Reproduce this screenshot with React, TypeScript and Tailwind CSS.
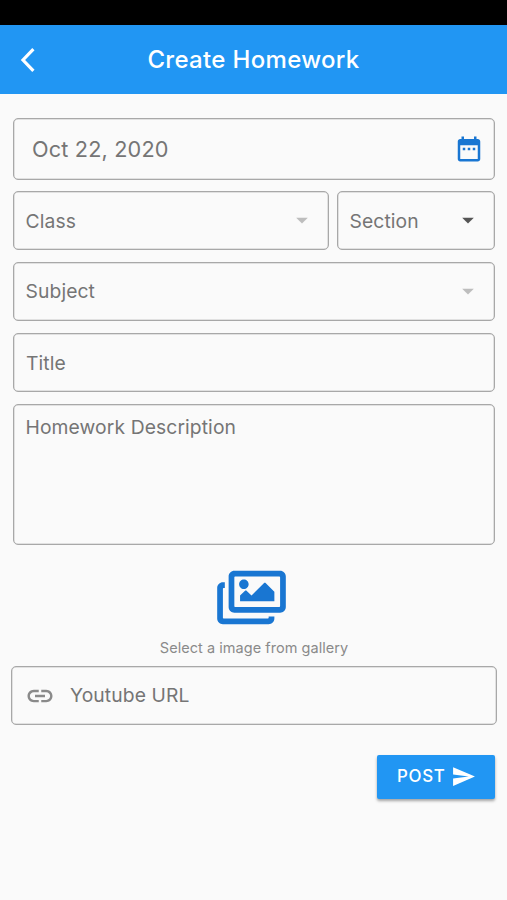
import React from 'react';
import { FaRegImages } from 'react-icons/fa';
import { MdArrowDropDown, MdLink, MdSend } from 'react-icons/md';
import { clsx } from 'clsx';

const BackIcon: React.FC<{ className?: string }> = ({ className }) => (
    <svg viewBox="0 0 16 26" fill="none" stroke="currentColor" strokeWidth="3.2" className={className}>
        <path d="M13.4 2.2L3 13l10.4 10.8" />
    </svg>
);

const CalendarIcon: React.FC<{ className?: string }> = ({ className }) => (
    <svg viewBox="0 0 24 24" fill="currentColor" className={className}>
        <path d="M9 11H7v2h2v-2zm4 0h-2v2h2v-2zm4 0h-2v2h2v-2zm2-7h-1V2h-2v2H8V2H6v2H5c-1.11 0-1.99.9-1.99 2L3 20c0 1.1.89 2 2 2h14c1.1 0 2-.9 2-2V6c0-1.1-.9-2-2-2zm0 16H5V9h14v11z" />
    </svg>
);

const Field: React.FC<{ className?: string; children: React.ReactNode }> = ({ className, children }) => (
    <div className={clsx('flex border border-[#a8a8a8] rounded-[5px] shadow-[inset_0_0_0_0.5px_#c8c8c8] text-[#757575] text-[19.3px] leading-6 tracking-[0.1px]', className)}>
        {children}
    </div>
);

const SelectField: React.FC<{ label: string; disabled?: boolean; className?: string }> = ({ label, disabled, className }) => (
    <Field className={clsx('items-center justify-between pl-[11.5px] pr-3', className)}>
        <span>{label}</span>
        <MdArrowDropDown className={clsx('w-7 h-7 -mt-px', disabled ? 'text-[#bdbdbd]' : 'text-[#555]')} />
    </Field>
);

export default function App() {
    return (
        <div className="w-full h-[900px] bg-[#fafafa] font-['Inter',sans-serif] overflow-hidden">
            {/* Status bar */}
            <div className="h-[25px] bg-black"></div>

            <header className="h-[69px] bg-[#2196f3] text-white grid grid-cols-[1fr_auto_1fr] items-center">
                <button className="pl-5" aria-label="Back">
                    <BackIcon className="w-4 h-[26px]" />
                </button>
                <h1 className="text-2xl font-medium tracking-[0.33px]">Create Homework</h1>
            </header>

            <main className="pt-6 pl-[13px] pr-3 flex flex-col">
                <Field className="h-[62px] items-center justify-between pl-[18px] pr-[10px]">
                    <span className="text-[21.7px] tracking-[0.15px]">Oct 22, 2020</span>
                    <CalendarIcon className="w-[30px] h-[30px] text-[#1976d2]" />
                </Field>

                <div className="flex gap-2 mt-[11px]">
                    <SelectField label="Class" disabled className="w-[316px] h-[59px]" />
                    <SelectField label="Section" className="flex-1 h-[59px]" />
                </div>

                <SelectField label="Subject" disabled className="mt-3 h-[59px] pb-px" />

                <Field className="mt-3 h-[59px] items-center pl-3">
                    <span>Title</span>
                </Field>

                <Field className="mt-3 h-[141px] pl-[11.5px] pt-[10px]">
                    <span>Homework Description</span>
                </Field>

                {/* Gallery picker */}
                <div className="flex flex-col items-center mt-[22px] h-[99px] text-[#1976d2]">
                    <FaRegImages className="w-[69px] h-[61px] mr-[5px]" />
                    <p className="mt-[10px] text-[14.5px] leading-5 tracking-[0.04px] text-[#8a8a8a]">Select a image from gallery</p>
                </div>

                <Field className="h-[59px] -mx-[2px] items-center pl-[13px]">
                    <MdLink className="w-[30px] h-[30px] text-[#8a8a8a]" />
                    <span className="ml-[15px] -mt-[2px]">Youtube URL</span>
                </Field>

                <button className="self-end mt-[30px] w-[118px] h-[44px] rounded-[2px] bg-[#2196f3] text-white flex items-center pl-5 shadow-[0_2px_3px_rgba(0,0,0,0.35)]">
                    <span className="text-[16.9px] font-medium tracking-[0.7px]">POST</span>
                    <MdSend className="ml-[5px] w-[25px] h-[25px] -mt-px" />
                </button>
            </main>
        </div>
    );
}
